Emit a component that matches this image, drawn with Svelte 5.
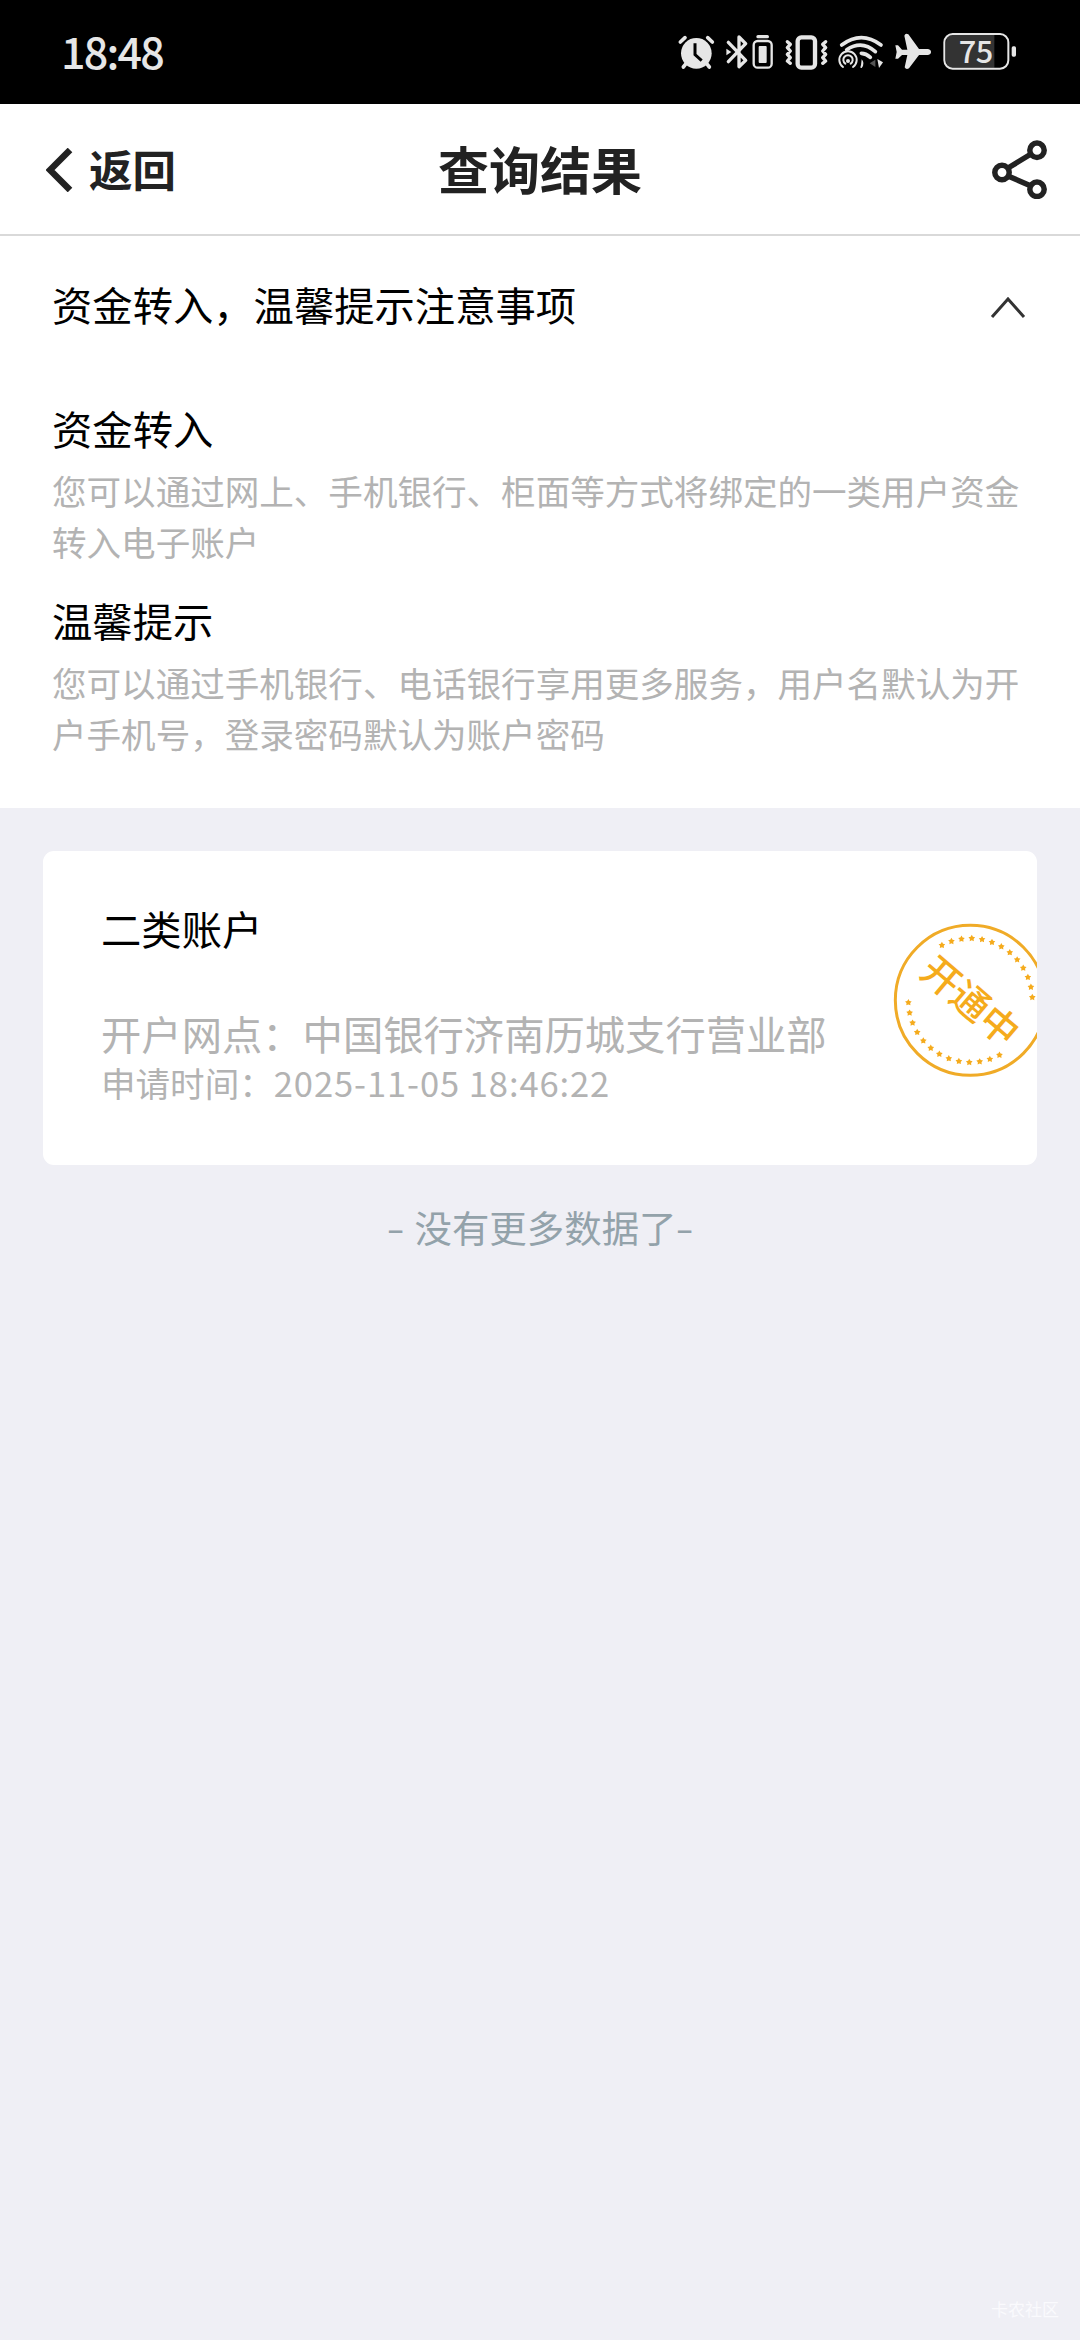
<script>
  const notices = [
    { title: '资金转入', lines: ['您可以通过网上、手机银行、柜面等方式将绑定的一类用户资金', '转入电子账户'] },
    { title: '温馨提示', lines: ['您可以通过手机银行、电话银行享用更多服务，用户名默认为开', '户手机号，登录密码默认为账户密码'] }
  ];

  const star = (cx, cy, r) =>
    Array.from({ length: 10 }, (_, i) => {
      const a = (-90 + i * 36) * Math.PI / 180;
      const k = i % 2 ? r * 0.55 : r;
      return `${(cx + k * Math.cos(a)).toFixed(1)},${(cy + k * Math.sin(a)).toFixed(1)}`;
    }).join(' ');

  const arc = (from, to) =>
    Array.from({ length: 13 }, (_, i) => {
      const a = (from + (to - from) * i / 12) * Math.PI / 180;
      return star(232 + 186 * Math.cos(a), 232 + 186 * Math.sin(a), 10.5);
    });

  const stars = [...arc(-117.3, -2.8), ...arc(178, 62)];
</script>

<div class="screen">
  <div class="status">
    <span class="clock">18:48</span>
    <svg class="indicators" viewBox="0 0 1040 120" fill="none" stroke="#e6e6e6" stroke-linecap="round" stroke-linejoin="round">
      <!-- alarm -->
      <g>
        <circle cx="55" cy="61" r="46" fill="#e6e6e6" stroke="none" />
        <path d="M7 27 21 14M103 27 89 14" stroke-width="11" />
        <path d="M24 92 16 102M86 92 94 102" stroke-width="11" />
        <path d="M51 31V65L71 83" stroke="#000" stroke-width="9" stroke-linecap="butt" stroke-linejoin="miter" />
      </g>
      <!-- bluetooth and its battery -->
      <g>
        <path d="M151 28 203 82 183 101V12L203 32 151 86" stroke-width="10" />
        <path d="M145 47 160 57 145 67Z" fill="#e6e6e6" stroke="none" />
        <path d="M240 11H268" stroke-width="10" />
        <rect x="227" y="27" width="54" height="80" rx="12" stroke-width="7" transform="translate(0 -3)" />
        <rect x="242" y="39" width="24" height="51" rx="3" fill="#e6e6e6" stroke="none" />
      </g>
      <!-- vibrate -->
      <g>
        <rect x="359" y="13" width="52" height="91" rx="11" stroke-width="13" />
        <path d="M328 26 337 34 328 44 337 54 328 64 337 74 328 84 337 91M443 26 434 34 443 44 434 54 443 64 434 74 443 84 434 91" stroke-width="10" />
      </g>
      <!-- wifi with hotspot -->
      <g>
        <path d="M491 36Q550-8 609 36" stroke-width="11" />
        <path d="M506 50Q552 20 592 56" stroke-width="11" />
        <path d="M550 61Q564 61 577 73" stroke-width="11" />
        <path d="M495 102A26 26 0 1 1 525 102" stroke-width="6" />
        <path d="M502 92A14 14 0 1 1 518 92" stroke-width="6" />
        <circle cx="510" cy="84" r="6" fill="#e6e6e6" stroke="none" />
        <path d="M551 79Q562 91 551 105 545 107 549 96Z" fill="#e6e6e6" stroke="none" />
        <path d="M592 80V102L575 91Z" fill="#555" stroke="none" />
        <path d="M598 78 615 88 603 105Z" fill="#e6e6e6" stroke="none" />
      </g>
      <!-- airplane mode -->
      <path d="M652 37H660L672 50H688L679 8Q682-1 691 4L723 48H750Q759 50 759 57T750 66H723L693 106Q684 111 680 103L688 66H672L660 77H652L656 57Z" fill="#e6e6e6" stroke="none" />
      <!-- battery -->
      <g>
        <path d="M949 6H825Q804 6 804 28V82Q804 104 825 104H949Z" fill="#333" stroke="none" />
        <rect x="799" y="3" width="192" height="104" rx="25" stroke-width="6" />
        <rect x="1001" y="40" width="13" height="31" rx="5" fill="#e6e6e6" stroke="none" />
        <text x="893" y="89" class="level">75</text>
      </g>
    </svg>
  </div>

  <header class="bar">
    <div class="back">
      <svg class="chevron" viewBox="0 0 27 44" fill="none" stroke="#222" stroke-width="6.5"><path d="M24 2 4 22 24 42" /></svg>
      <span>返回</span>
    </div>
    <h1>查询结果</h1>
    <svg class="share" viewBox="0 0 60 60" fill="none" stroke="#222" stroke-width="5.5">
      <path d="M18 29 41 15M18 37 41 47" />
      <circle cx="12" cy="33.5" r="7.2" /><circle cx="47" cy="11.3" r="7.2" /><circle cx="47" cy="50.3" r="7.2" />
    </svg>
  </header>

  <section class="notice">
    <div class="summary">
      <span>资金转入，温馨提示注意事项</span>
      <svg class="caret" viewBox="0 0 36 24" fill="none" stroke="#333" stroke-width="3"><path d="M2 22 18 4 34 22" /></svg>
    </div>
    {#each notices as n}
      <div class="item">
        <h2>{n.title}</h2>
        {#each n.lines as line}<p>{line}</p>{/each}
      </div>
    {/each}
  </section>

  <section class="card">
    <h2>二类账户</h2>
    <p class="branch">开户网点：中国银行济南历城支行营业部</p>
    <p class="time">申请时间：<span>2025-11-05 18:46:22</span></p>
    <svg class="stamp" viewBox="0 0 464 464" fill="#f5ab1c">
      <circle cx="232" cy="232" r="225" fill="none" stroke="#f0ab27" stroke-width="9" />
      {#each stars as points}<polygon {points} />{/each}
      <text x="232" y="276" transform="rotate(40.5 232 235)">开通中</text>
    </svg>
  </section>

  <p class="end"><span class="dash">-</span><span>没有更多数据了</span><span class="dash">-</span></p>
  <footer>卡农社区</footer>
</div>

<style>
  :global(body) { margin: 0; background: #efeff5; }
  .screen {
    box-sizing: border-box;
    width: 1080px;
    height: 2340px;
    display: flex;
    flex-direction: column;
    background: #efeff5;
    font-family: "Noto Sans CJK SC", sans-serif;
    color: #000;
    overflow: hidden;
    white-space: nowrap;
  }
  h1, h2, p { margin: 0; font-weight: 400; }

  .status {
    height: 104px;
    flex: none;
    box-sizing: border-box;
    background: #000;
    display: flex;
    justify-content: space-between;
    align-items: flex-start;
    padding: 28px 58px 0 61px;
  }
  .clock {
    font: 500 43px/44px "Noto Sans CJK SC", sans-serif;
    letter-spacing: -1.8px;
    color: #e6e6e6;
  }
  .indicators { width: 346.7px; height: 40px; margin: 5px -3px 0 0; overflow: visible; }
  .level {
    font: 500 92px "Noto Sans CJK SC", sans-serif;
    letter-spacing: -2px;
    fill: #e6e6e6;
    stroke: none;
    text-anchor: middle;
  }

  .bar {
    height: 132px;
    flex: none;
    box-sizing: border-box;
    border-bottom: 2px solid #d9d9d9;
    background: #fff;
    display: grid;
    grid-template-columns: 1fr auto 1fr;
    align-items: center;
    padding: 0 30px;
    color: #222;
  }
  .back { display: flex; align-items: center; gap: 16px; margin-left: 16px; font-size: 43.5px; font-weight: 700; line-height: 60px; }
  .chevron { width: 27px; height: 44px; margin-top: 2px; }
  h1 { font-size: 51px; font-weight: 700; line-height: 70px; margin-top: -2px; }
  .share { width: 60px; height: 60px; justify-self: end; }

  .notice { height: 572px; flex: none; box-sizing: border-box; background: #fff; padding: 38px 52px 0; }
  .summary { display: flex; justify-content: space-between; align-items: center; font-size: 40.32px; line-height: 60px; margin-bottom: 64px; }
  .caret { width: 36px; height: 24px; margin-right: 2px; margin-top: 6px; }
  .item { margin-bottom: 23px; }
  .item h2 { font-size: 40.32px; line-height: 60px; margin-bottom: 7px; }
  .item p { font-size: 34.56px; line-height: 51px; color: #b3b3b3; }

  .card {
    position: relative;
    margin: 43px 43px 0;
    height: 314px;
    flex: none;
    box-sizing: border-box;
    border-radius: 11px;
    background: #fff;
    padding: 47px 58px 0;
    overflow: hidden;
  }
  .card h2 { font-size: 40.32px; line-height: 60px; margin-bottom: 46px; }
  .card p { color: #b3b3b3; }
  .branch { font-size: 40.32px; line-height: 57px; }
  .time { font-size: 34.56px; line-height: 43px; }
  .time span { letter-spacing: 0.9px; }
  .stamp { position: absolute; right: -11px; top: 72px; width: 154.7px; height: 154.7px; }
  .stamp text { font: 500 114px "Noto Sans CJK SC", sans-serif; text-anchor: middle; }

  .end {
    display: flex;
    justify-content: center;
    font-size: 37.44px;
    line-height: 56px;
    margin-top: 34px;
    color: #93a2aa;
  }
  .end .dash { width: 17px; text-align: center; transform: translateY(-1px) scaleX(1.4); }
  .end .dash:first-child { margin-right: 11px; }
  footer {
    margin-top: auto;
    align-self: flex-end;
    padding: 0 21px 19px 0;
    font-size: 17px;
    line-height: 24px;
    color: #fafafd;
  }
</style>
